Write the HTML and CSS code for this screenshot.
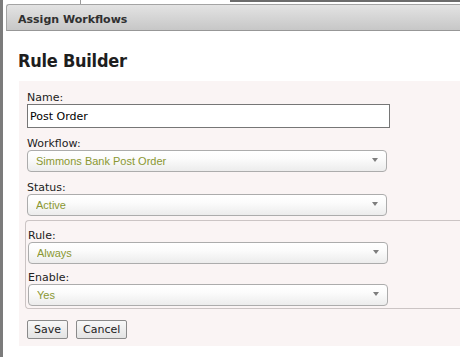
FILE: index.html
```html
<!DOCTYPE html>
<html lang="en">
<head>
    <meta charset="UTF-8">
    <title>Assign Workflows</title>
    <link rel="stylesheet" href="styles.css">
</head>
<body>
    <div class="page">
        <div class="backdrop">
            <span class="backdrop-tick"></span>
            <span class="backdrop-bar"></span>
        </div>

        <div class="dialog">
            <div class="dialog-title">Assign Workflows</div>
            <div class="dialog-body">
                <h2 class="builder-title">Rule Builder</h2>

                <form class="rule-panel" onsubmit="return false">
                    <label class="field-label" for="rule-name">Name:</label>
                    <input class="text-input" id="rule-name" type="text" value="Post Order">

                    <label class="field-label spaced" for="rule-workflow">Workflow:</label>
                    <div class="select-wrap">
                        <select class="select" id="rule-workflow">
                            <option>Simmons Bank Post Order</option>
                        </select>
                        <svg class="select-arrow" width="6" height="4" viewBox="0 0 6 4"><path d="M0 0H6L3 4Z" fill="#7d7d7d"/></svg>
                    </div>

                    <label class="field-label spaced" for="rule-status">Status:</label>
                    <div class="select-wrap">
                        <select class="select" id="rule-status">
                            <option>Active</option>
                        </select>
                        <svg class="select-arrow" width="6" height="4" viewBox="0 0 6 4"><path d="M0 0H6L3 4Z" fill="#7d7d7d"/></svg>
                    </div>

                    <fieldset class="rule-group">
                        <label class="field-label" for="rule-rule">Rule:</label>
                        <div class="select-wrap">
                            <select class="select" id="rule-rule">
                                <option>Always</option>
                            </select>
                            <svg class="select-arrow" width="6" height="4" viewBox="0 0 6 4"><path d="M0 0H6L3 4Z" fill="#7d7d7d"/></svg>
                        </div>

                        <label class="field-label tight" for="rule-enable">Enable:</label>
                        <div class="select-wrap">
                            <select class="select" id="rule-enable">
                                <option>Yes</option>
                            </select>
                            <svg class="select-arrow" width="6" height="4" viewBox="0 0 6 4"><path d="M0 0H6L3 4Z" fill="#7d7d7d"/></svg>
                        </div>
                    </fieldset>

                    <div class="actions">
                        <button class="btn" type="submit">Save</button>
                        <button class="btn" type="button">Cancel</button>
                    </div>
                </form>
            </div>
        </div>
    </div>
</body>
</html>
```

FILE: styles.css
```css
body {
    margin: 0;
    background: #fff;
    font-family: "DejaVu Sans", Verdana, sans-serif;
    font-size: 11px;
    color: #222;
    overflow: hidden;
}
.page {
    height: 357px;
    border-left: 3px solid #7b7b7b;
    overflow: hidden;
}
.backdrop {
    display: flex;
    height: 4px;
}
.backdrop-tick {
    width: 1px;
    height: 4px;
    margin-left: 77px;
    background: #9a9a9a;
}
.backdrop-bar {
    flex: 1;
    height: 2px;
    margin-left: 149px;
    background: #6c6c6c;
}
.dialog {
    width: 540px;
    margin-left: 3px;
}
.dialog-title {
    box-sizing: border-box;
    height: 27px;
    padding: 8px 0 0 11px;
    border: 1px solid #a4a4a4;
    border-bottom-color: #979797;
    border-right: none;
    border-radius: 3px 0 0 0;
    background: linear-gradient(#e3e3e3, #c7c7c7);
    font-weight: bold;
    line-height: 13px;
    color: #303030;
}
.dialog-body {
    padding-left: 12px;
}
.builder-title {
    margin: 19px 0 9px;
    font-family: "DejaVu Sans Condensed", "DejaVu Sans", sans-serif;
    font-size: 18px;
    line-height: 22px;
    font-weight: bold;
    letter-spacing: -0.25px;
    color: #1e1e1e;
}
.rule-panel {
    margin: 0 0 0 1px;
    padding: 10px 0 7px 8px;
    background: #faf4f4;
}
.field-label {
    display: block;
    line-height: 13px;
    color: #222;
}
.field-label.spaced {
    margin-top: 9px;
}
.field-label.tight {
    margin-top: 7px;
}
.text-input {
    display: block;
    box-sizing: border-box;
    width: 363px;
    height: 24px;
    margin: 0;
    padding: 0 2px;
    border: 1px solid #767676;
    background: #fff;
    font-family: "DejaVu Sans", Verdana, sans-serif;
    font-size: 11px;
    color: #000;
    outline: none;
}
.select-wrap {
    position: relative;
    width: 360px;
    height: 22px;
}
.select {
    appearance: none;
    -webkit-appearance: none;
    box-sizing: border-box;
    width: 100%;
    height: 22px;
    margin: 0;
    padding: 0 20px 0 8px;
    border: 1px solid #acacac;
    border-radius: 4px;
    background: linear-gradient(#fff 0%, #fbfbfb 40%, #ececec 100%);
    font-family: "Liberation Sans", Arial, sans-serif;
    font-size: 11px;
    color: #8a9731;
    outline: none;
}
.select-arrow {
    position: absolute;
    right: 9px;
    top: 8px;
    pointer-events: none;
}
.rule-group {
    min-width: 0;
    margin: 4px 0 0 -2px;
    padding: 8px 0 2px 2px;
    border: 1px solid #cbc4c4;
    border-right: none;
    border-radius: 4px 0 0 4px;
}
.actions {
    display: flex;
    gap: 8px;
    margin-top: 11px;
}
.btn {
    box-sizing: border-box;
    height: 19px;
    margin: 0;
    padding: 0 6px;
    border: 1px solid #8a8a8a;
    border-radius: 2px;
    background: linear-gradient(#f8f8f8, #e3e3e3);
    font-family: "DejaVu Sans", Verdana, sans-serif;
    font-size: 11px;
    color: #222;
    cursor: pointer;
}
```
